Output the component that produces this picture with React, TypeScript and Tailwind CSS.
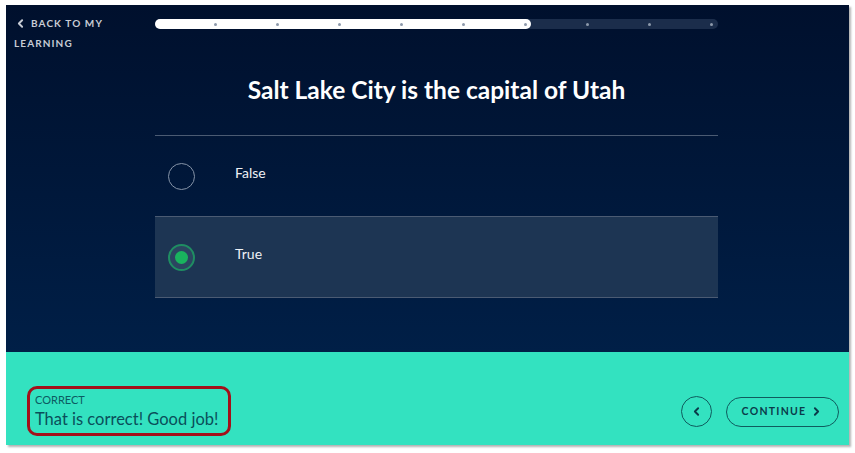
import {ChevronLeft, ChevronRight} from "lucide-react";

const dots = [1, 2, 3, 4, 5, 6, 7, 8, 9];

function ProgressBar() {
    return (
        <div className="relative w-[563px] h-[10px] rounded-full bg-[#1b2d4b] flex items-center">
            <div className="absolute left-0 top-0 h-full w-[376px] rounded-full bg-white"/>
            <div className="relative flex w-full items-center pl-[59px] gap-[59px]">
                {dots.map(d => (
                    <span key={d} className="w-[3px] h-[3px] rounded-full bg-[#8d99ab]"/>
                ))}
            </div>
        </div>
    );
}

function Option({label, selected}: { label: string; selected?: boolean }) {
    return (
        <div
            className={`h-[81px] flex items-center border-b border-[#4b5b73] ${selected ? "bg-[#1d3553]" : ""}`}>
            <div className="w-[80px] pl-[13px]">
                {selected ? (
                    <span
                        className="w-[27px] h-[27px] rounded-full border-2 border-[#1f8d62] bg-[#2b4560] flex items-center justify-center">
                        <span className="w-[13px] h-[13px] rounded-full bg-[#19b35e]"/>
                    </span>
                ) : (
                    <span className="block w-[27px] h-[27px] rounded-full border border-[#8694a8]"/>
                )}
            </div>
            <span className="text-[14px] text-[#eef1f5] mb-[8px]">{label}</span>
        </div>
    );
}

export default function App() {
    return (
        <div className="w-[855px] h-[453px] bg-white pl-[6px] pt-[5px]" style={{fontFamily: "Lato, 'Open Sans', sans-serif"}}>
            <div className="w-[843px] h-[440px] flex flex-col shadow-[2px_2px_2px_rgba(0,0,0,0.3)]">
                <div className="h-[347px] bg-gradient-to-b from-[#00102d] to-[#001f47] flex">
                    <div className="w-[149px] pl-[8px] pt-[8px]">
                        <a className="block text-[10px] font-bold tracking-[0.11em] leading-[20px] text-[#c7ccd5]">
                            <ChevronLeft className="inline w-[13px] h-[13px] mr-[4px] -mt-[2px]" strokeWidth={3.5}/>
                            BACK TO MY LEARNING
                        </a>
                    </div>
                    <div className="w-[563px] flex flex-col pt-[14px]">
                        <ProgressBar/>
                        <h1 className="text-center text-[24.5px] font-bold text-white mt-[43px] h-[63px]">
                            Salt Lake City is the capital of Utah
                        </h1>
                        <div className="border-t border-[#4b5b73]">
                            <Option label="False"/>
                            <Option label="True" selected/>
                        </div>
                    </div>
                </div>
                <div className="flex-1 bg-[#33e2c0] flex items-end justify-between pl-[21px] pr-[10px] pb-[9px]">
                    <div className="border-[3px] border-[#a3101a] rounded-[10px] w-[204px] h-[50px] px-[5px] pt-[4px] whitespace-nowrap">
                        <div className="text-[11px] leading-[14px] text-[#0c5b62]">CORRECT</div>
                        <div className="text-[16.5px] leading-[24px] text-[#0a4f5a]">That is correct! Good job!</div>
                    </div>
                    <div className="flex items-center gap-[14px] mb-[9px]">
                        <button
                            className="w-[31px] h-[31px] rounded-full border-[1.5px] border-[#0f5c5e] flex items-center justify-center text-[#0b3b4a]">
                            <ChevronLeft className="w-[13px] h-[13px]" strokeWidth={3.5}/>
                        </button>
                        <button
                            className="w-[113px] h-[30px] rounded-full border-[1.5px] border-[#0f5c5e] flex items-center justify-center gap-[4px] text-[10.5px] font-bold tracking-[0.12em] text-[#0b3b4a]">
                            CONTINUE
                            <ChevronRight className="w-[13px] h-[13px]" strokeWidth={3.5}/>
                        </button>
                    </div>
                </div>
            </div>
        </div>
    );
}
